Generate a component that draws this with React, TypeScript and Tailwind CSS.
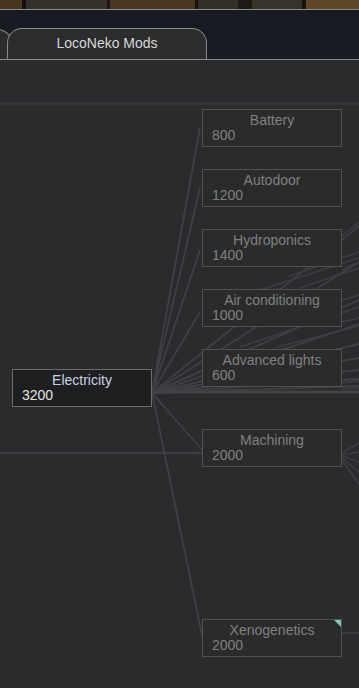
import React from 'react'

type Tech = {
  name: string
  cost: number
  x: number
  y: number
  active?: boolean
  fresh?: boolean
}

// page coordinates; canvas starts at y=60
const techs: Tech[] = [
  { name: 'Electricity', cost: 3200, x: 12, y: 369, active: true },
  { name: 'Battery', cost: 800, x: 202, y: 109 },
  { name: 'Autodoor', cost: 1200, x: 202, y: 169 },
  { name: 'Hydroponics', cost: 1400, x: 202, y: 229 },
  { name: 'Air conditioning', cost: 1000, x: 202, y: 289 },
  { name: 'Advanced lights', cost: 600, x: 202, y: 349 },
  { name: 'Machining', cost: 2000, x: 202, y: 429 },
  { name: 'Xenogenetics', cost: 2000, x: 202, y: 619, fresh: true },
]

const O = [152, 393]
const fanTargets: [number, number][] = [
  [200, 127],
  [200, 188],
  [200, 250],
  [200, 312],
  [200, 372],
  [204, 452],
  [204, 645],
  [359, 226],
  [359, 262],
  [359, 300],
  [359, 324],
  [359, 344],
  [359, 358],
  [359, 370],
  [359, 379],
  [359, 386],
]

const segments: [number, number, number, number][] = [
  [0, 453, 204, 453],
  [240, 347, 359, 307],
  [277, 347, 359, 326],
  [287, 277, 359, 252],
  [300, 288, 359, 268],
  [260, 290, 359, 258],
  [342, 300, 359, 295],
  [342, 322, 359, 318],
  [342, 236, 359, 222],
  [342, 270, 359, 262],
  [342, 383, 359, 381],
  [342, 389, 359, 388],
  [342, 453, 359, 443],
  [342, 455, 359, 452],
  [342, 456, 359, 462],
  [342, 458, 359, 472],
  [342, 460, 359, 484],
  [342, 633, 359, 633],
]

function TechBox({ t }: { t: Tech }) {
  return (
    <div
      className={`absolute w-[140px] h-[38px] border pt-[3px] pl-[9px] pr-1 leading-[15px] text-[14px] ${
        t.active
          ? 'bg-[#1e1f20] border-[#6c6c6c]'
          : 'bg-[#2b2b2c] border-[#525252]'
      }`}
      style={{ left: t.x, top: t.y - 60 }}
    >
      <div
        className={`text-center pr-[5px] ${
          t.active ? 'text-[#cbd0e2]' : 'text-[#808080]'
        }`}
      >
        {t.name}
      </div>
      <div className={t.active ? 'text-[#e4e4e4]' : 'text-[#808080]'}>
        {t.cost}
      </div>
      {t.fresh && (
        <div className="absolute top-0 right-0 w-0 h-0 border-l-[7px] border-l-transparent border-t-[7px] border-t-[#86c4b6]" />
      )}
    </div>
  )
}

export default function App() {
  return (
    <div
      className="w-[359px] h-[688px] overflow-hidden bg-[#2a2b2d]"
      style={{ fontFamily: '"Liberation Sans", Arial, sans-serif' }}
    >
      {/* game backdrop strip */}
      <div className="flex h-[9px] bg-[#4e3a22]">
        <div className="w-[22px] bg-[#4a3620]" />
        <div className="w-[4px] bg-[#141210]" />
        <div className="w-[81px] bg-[#35312a]" />
        <div className="w-[3px] bg-[#1a1714]" />
        <div className="w-[85px] bg-[#4a3722]" />
        <div className="w-[3px] bg-[#171411]" />
        <div className="w-[40px] bg-[#332e28]" />
        <div className="w-[14px] bg-[#1d1a16]" />
        <div className="w-[50px] bg-[#37322a]" />
        <div className="w-[4px] bg-[#161310]" />
        <div className="flex-1 bg-[#5e4528]" />
      </div>
      <div className="h-px bg-[#8a8a8a]" />

      {/* tabs */}
      <div className="h-[49px] bg-[#171b21] flex items-end">
        <div className="-ml-[22px] w-[34px] h-[30px] bg-[#2b2c2e] border border-b-0 border-[#8a8a8a] rounded-tr-[14px]" />
        <div className="relative -ml-[5px] w-[200px] h-[31px] bg-[#2b2c2e] border border-b-0 border-[#8a8a8a] rounded-t-[15px] flex items-center justify-center pb-px text-[14px] text-[#d8d8d8]">
          LocoNeko Mods
        </div>
      </div>
      <div className="h-px bg-[#8a8a8a]" />

      {/* research tree canvas */}
      <div className="relative h-[628px]">
        <svg
          className="absolute inset-0"
          width={359}
          height={628}
          viewBox="0 60 359 628"
        >
          <line x1={0} y1={103.5} x2={359} y2={103.5} stroke="#38393c" strokeWidth={2.5} />
          {fanTargets.map(([x, y], i) => (
            <line
              key={i}
              x1={O[0]}
              y1={O[1]}
              x2={x}
              y2={y}
              stroke="#3f4044"
              strokeWidth={1.8}
            />
          ))}
          <line x1={152} y1={392} x2={359} y2={392} stroke="#424346" strokeWidth={3} />
          {segments.map(([a, b, c, d], i) => (
            <line
              key={i}
              x1={a}
              y1={b}
              x2={c}
              y2={d}
              stroke={i === 0 ? '#3b3c3f' : '#3d3e42'}
              strokeWidth={i === 0 ? 2.5 : 1.6}
            />
          ))}
        </svg>
        {techs.map((t) => (
          <TechBox key={t.name} t={t} />
        ))}
      </div>
    </div>
  )
}
